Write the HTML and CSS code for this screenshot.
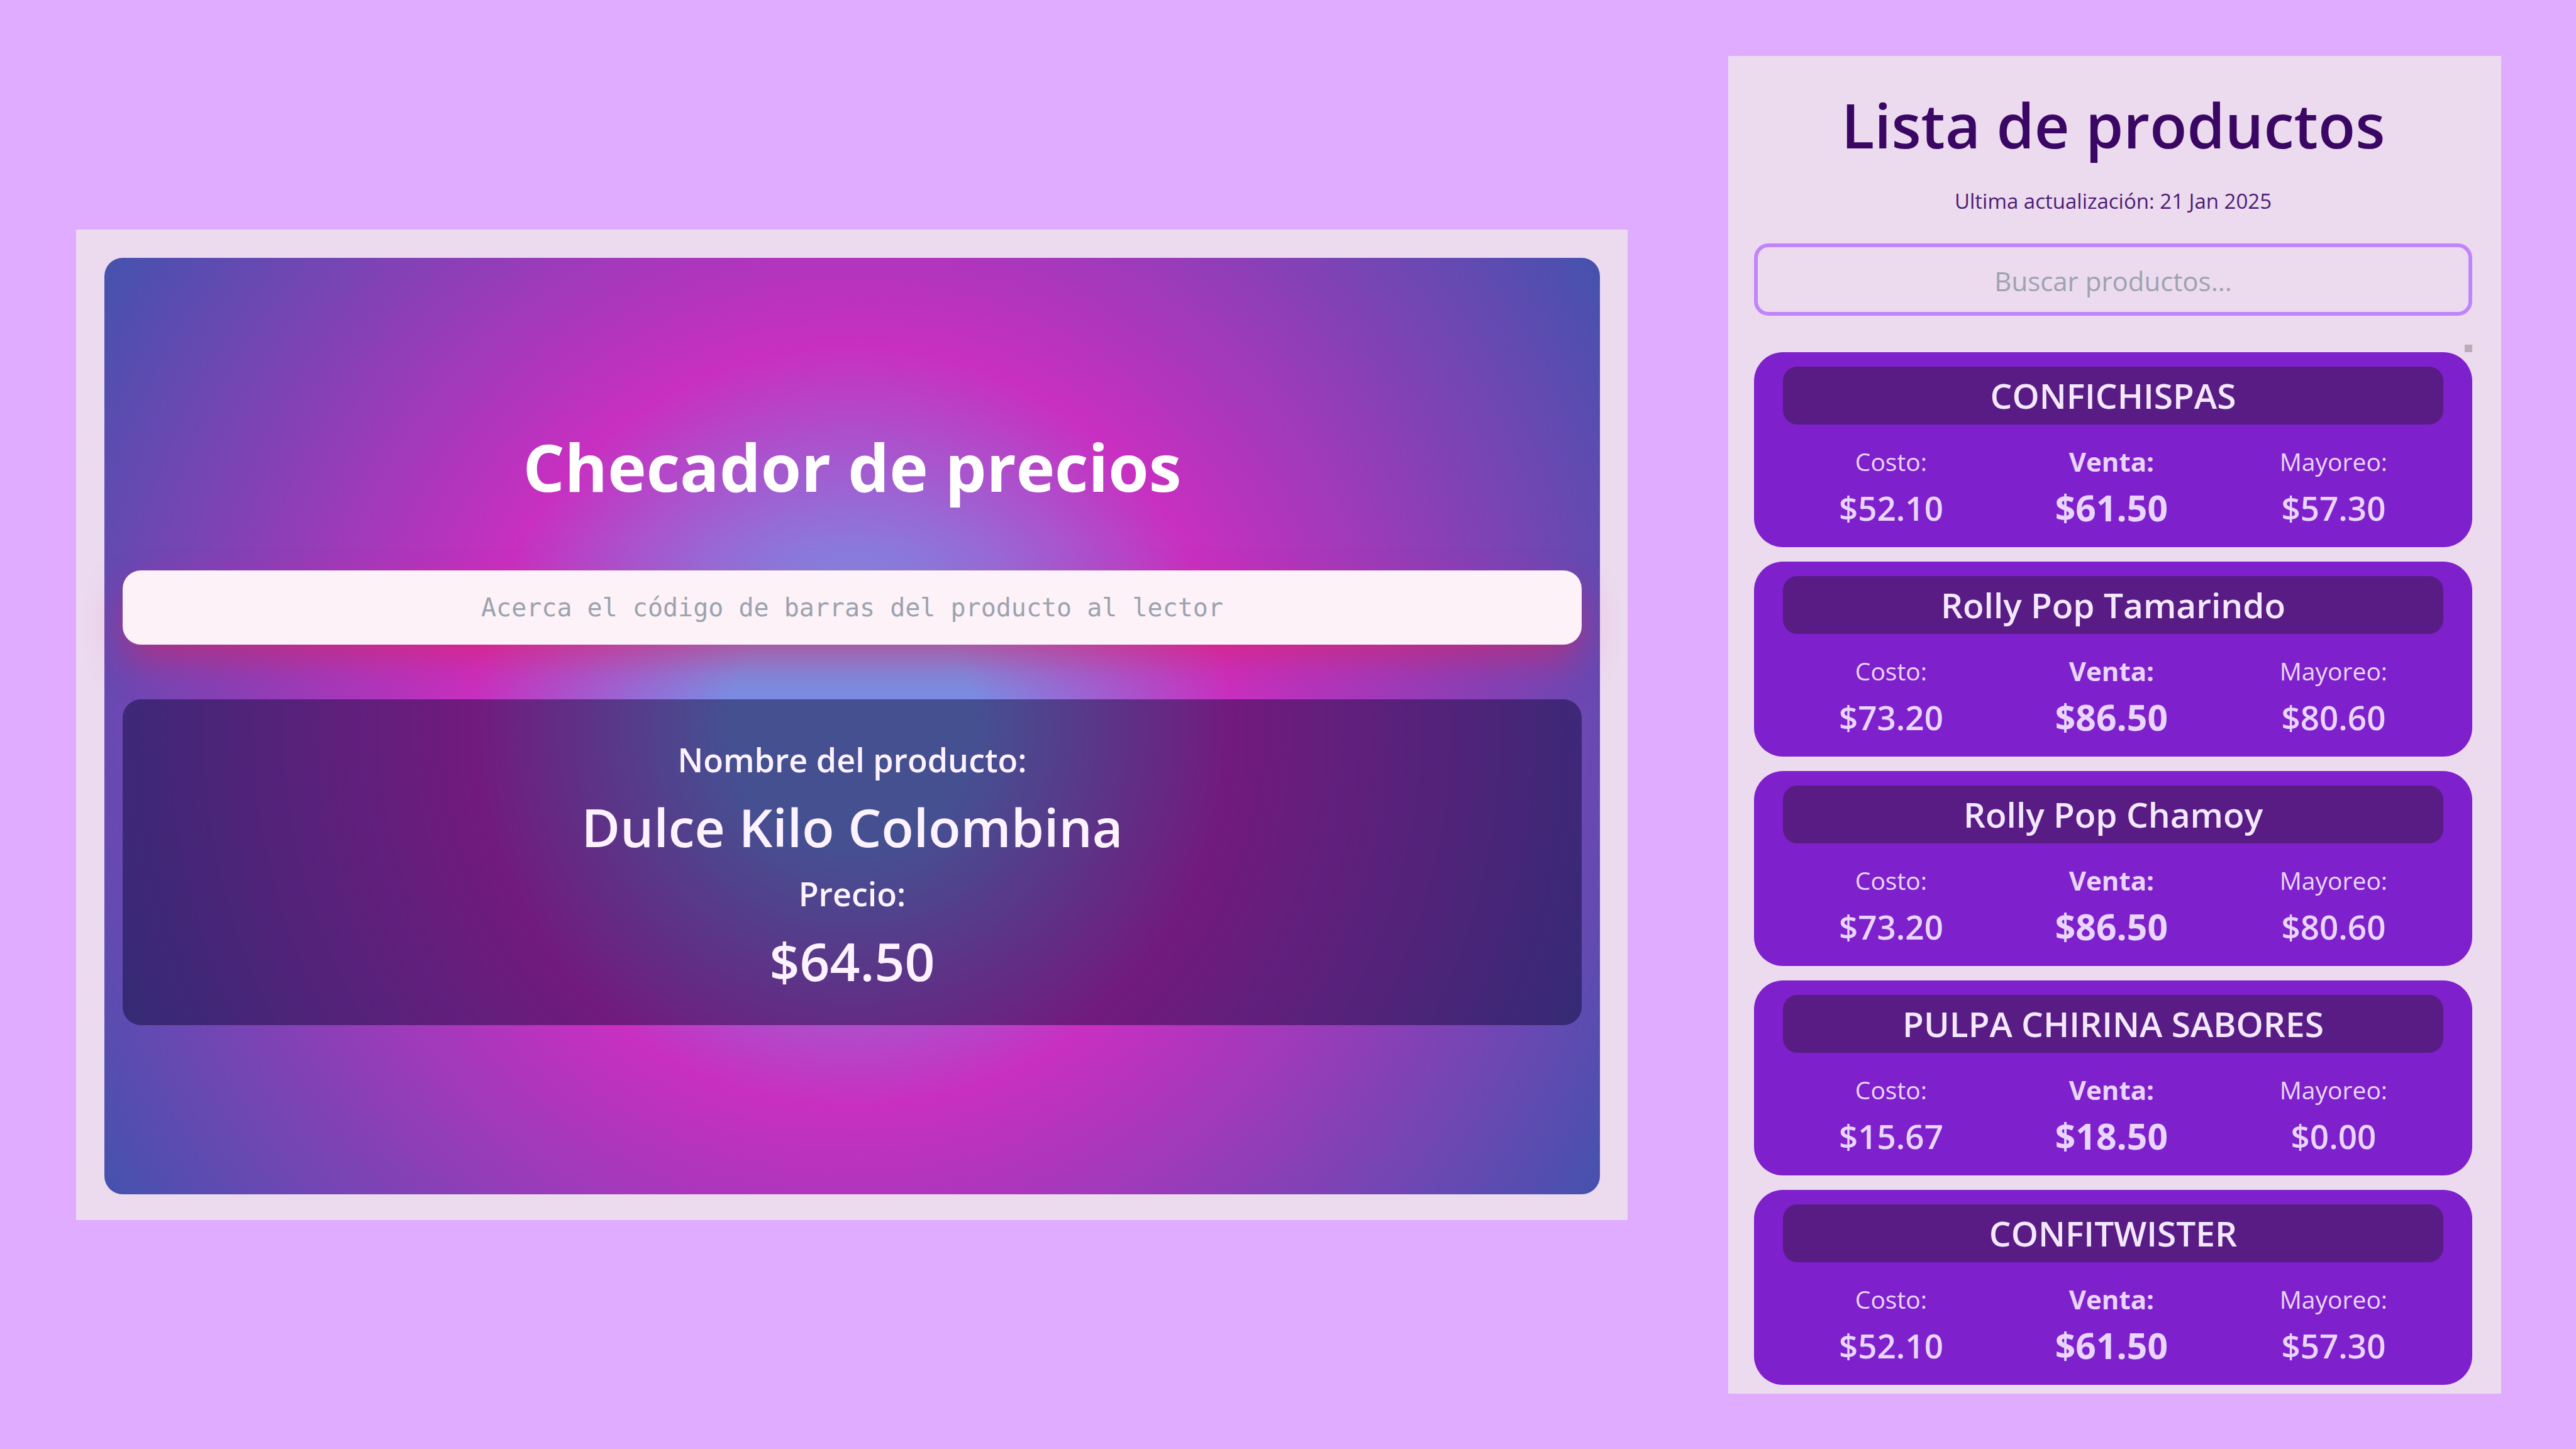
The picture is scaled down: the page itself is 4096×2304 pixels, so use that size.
FILE: index.html
```html
<!DOCTYPE html>
<html lang="es">
<head>
<meta charset="utf-8">
<title>Checador de precios</title>
<link rel="stylesheet" href="styles.css">
</head>
<body>
<main class="stage">
  <section class="panel checker">
    <div class="checker-card">
      <h1 class="checker-title">Checador de precios</h1>
      <input class="barcode" type="text" aria-label="Código de barras" placeholder="Acerca el código de barras del producto al lector">
      <div class="result">
        <p class="result-label">Nombre del producto:</p>
        <p class="result-value">Dulce Kilo Colombina</p>
        <p class="result-label">Precio:</p>
        <p class="result-value">$64.50</p>
      </div>
    </div>
  </section>

  <section class="panel catalog">
    <h2 class="catalog-title">Lista de productos</h2>
    <p class="updated">Ultima actualización: 21 Jan 2025</p>
    <input class="search" type="text" aria-label="Buscar productos" placeholder="Buscar productos...">
    <div class="marker"></div>
    <ul class="products">
      <li class="product">
        <h3 class="product-name">CONFICHISPAS</h3>
        <dl class="prices">
          <div class="price"><dt>Costo:</dt><dd>$52.10</dd></div>
          <div class="price price-main"><dt>Venta:</dt><dd>$61.50</dd></div>
          <div class="price"><dt>Mayoreo:</dt><dd>$57.30</dd></div>
        </dl>
      </li>
      <li class="product">
        <h3 class="product-name">Rolly Pop Tamarindo</h3>
        <dl class="prices">
          <div class="price"><dt>Costo:</dt><dd>$73.20</dd></div>
          <div class="price price-main"><dt>Venta:</dt><dd>$86.50</dd></div>
          <div class="price"><dt>Mayoreo:</dt><dd>$80.60</dd></div>
        </dl>
      </li>
      <li class="product">
        <h3 class="product-name">Rolly Pop Chamoy</h3>
        <dl class="prices">
          <div class="price"><dt>Costo:</dt><dd>$73.20</dd></div>
          <div class="price price-main"><dt>Venta:</dt><dd>$86.50</dd></div>
          <div class="price"><dt>Mayoreo:</dt><dd>$80.60</dd></div>
        </dl>
      </li>
      <li class="product">
        <h3 class="product-name">PULPA CHIRINA SABORES</h3>
        <dl class="prices">
          <div class="price"><dt>Costo:</dt><dd>$15.67</dd></div>
          <div class="price price-main"><dt>Venta:</dt><dd>$18.50</dd></div>
          <div class="price"><dt>Mayoreo:</dt><dd>$0.00</dd></div>
        </dl>
      </li>
      <li class="product">
        <h3 class="product-name">CONFITWISTER</h3>
        <dl class="prices">
          <div class="price"><dt>Costo:</dt><dd>$52.10</dd></div>
          <div class="price price-main"><dt>Venta:</dt><dd>$61.50</dd></div>
          <div class="price"><dt>Mayoreo:</dt><dd>$57.30</dd></div>
        </dl>
      </li>
    </ul>
  </section>
</main>
</body>
</html>
```
FILE: styles.css
```css
* {
  box-sizing: border-box;
  margin: 0;
  padding: 0;
}

body {
  background: #e0acff;
  font-family: "Open Sans", "Noto Sans", sans-serif;
}

.stage {
  display: grid;
  grid-template-columns: 2467fr 1229fr;
  column-gap: 160px;
  align-items: center;
  min-height: 100vh;
  padding: 0 119px 0 121px;
}

.panel {
  background: #ecdaef;
  text-align: center;
}

/* Price checker */
.checker {
  padding: 45px 44px 41px 45px;
}

.checker-card {
  display: flex;
  flex-direction: column;
  padding: 264px 29px 269px;
  border-radius: 29px;
  background: radial-gradient(circle, #7a8de2 14%, #c82fc0 43%, #4452ad 100%);
}

.checker-title {
  color: #ffffff;
  font-size: 104px;
  font-weight: 700;
  line-height: 136px;
  margin-bottom: 97px;
}

.barcode {
  width: 100%;
  height: 118px;
  border: 0;
  border-radius: 29px;
  background: #fdf2f8;
  box-shadow: 0 29px 58px -6px rgba(228, 30, 88, 0.52);
  color: #3b0764;
  font-family: "DejaVu Sans Mono", monospace;
  font-size: 40px;
  text-align: center;
}

.barcode::placeholder,
.search::placeholder {
  color: #9ca3af;
  opacity: 1;
}

.result {
  position: relative;
  margin-top: 87px;
  padding: 48px 29px 44px;
  border-radius: 29px;
  background: rgba(0, 0, 40, 0.43);
  color: #fdf2ff;
  font-weight: 600;
}

.result-label {
  font-size: 52px;
  line-height: 96px;
}

.result-value {
  font-size: 84px;
  line-height: 117px;
}

/* Product list */
.catalog {
  padding: 46px 46px 14px 41px;
}

.catalog-title {
  color: #3b0764;
  font-size: 97px;
  font-weight: 600;
  line-height: 126px;
}

.updated {
  margin-top: 36px;
  color: #4c1d74;
  font-size: 33px;
  line-height: 46px;
}

.search {
  width: 100%;
  height: 115px;
  margin-top: 44px;
  padding-top: 4px;
  border: 6px solid #c084fc;
  border-radius: 23px;
  background: transparent;
  color: #3b0764;
  font-family: inherit;
  font-size: 42px;
  text-align: center;
}

.marker {
  width: 12px;
  height: 12px;
  margin: 46px 0 0 auto;
  background: #b9adb9;
}

.products {
  display: flex;
  flex-direction: column;
  gap: 23px;
  list-style: none;
}

.product {
  padding: 23px 46px;
  border-radius: 46px;
  background: #7e20cb;
}

.product-name {
  border-radius: 23px;
  background: #581c84;
  color: #f3e8ff;
  font-size: 55px;
  font-weight: 600;
  line-height: 92px;
}

.prices {
  display: flex;
  justify-content: space-around;
  padding-top: 24px;
  color: #e9d5ff;
}

.price dt {
  font-size: 39px;
  line-height: 69px;
}

.price dd {
  font-size: 53px;
  font-weight: 600;
  line-height: 79px;
}

.price-main dt {
  font-size: 42px;
  font-weight: 700;
}

.price-main dd {
  font-size: 57px;
  font-weight: 700;
}
```
